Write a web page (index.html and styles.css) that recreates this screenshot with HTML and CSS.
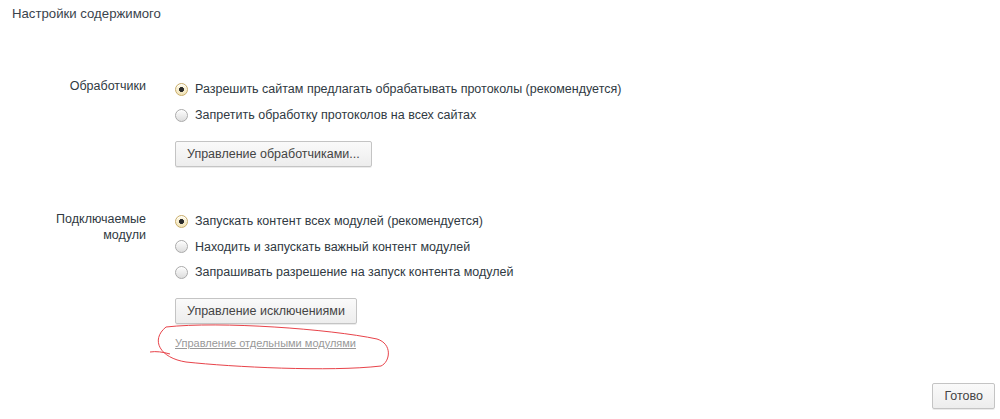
FILE: index.html
```html
<!DOCTYPE html>
<html lang="ru">
<head>
<meta charset="utf-8">
<title>Настройки содержимого</title>
<link rel="stylesheet" href="styles.css">
</head>
<body>
<div class="page">
  <h1 class="title">Настройки содержимого</h1>

  <section class="section first">
    <div class="label">Обработчики</div>
    <div class="content">
      <label class="radio-row"><span class="radio checked"></span>Разрешить сайтам предлагать обрабатывать протоколы (рекомендуется)</label>
      <label class="radio-row"><span class="radio"></span>Запретить обработку протоколов на всех сайтах</label>
      <button class="btn">Управление обработчиками...</button>
    </div>
  </section>

  <section class="section second">
    <div class="label">Подключаемые<br>модули</div>
    <div class="content">
      <label class="radio-row"><span class="radio checked"></span>Запускать контент всех модулей (рекомендуется)</label>
      <label class="radio-row short"><span class="radio"></span>Находить и запускать важный контент модулей</label>
      <label class="radio-row"><span class="radio"></span>Запрашивать разрешение на запуск контента модулей</label>
      <button class="btn">Управление исключениями</button>
      <a class="link" href="#">Управление отдельными модулями</a>
    </div>
  </section>

  <div class="footer">
    <button class="btn done">Готово</button>
  </div>

  <svg class="scribble" width="1000" height="419" viewBox="0 0 1000 419" aria-hidden="true">
    <path d="M 166 327 C 220 321, 330 329, 377 339 C 393 344, 390 362, 381 366 C 330 372, 232 367, 186 362 C 160 358, 150 340, 166 327" fill="none" stroke="#e8434a" stroke-width="1"/>
    <path d="M 150 352 C 156 351, 163 352, 170 354" fill="none" stroke="#e8434a" stroke-width="1"/>
  </svg>
</div>
</body>
</html>
```

FILE: styles.css
```css
html, body {
  margin: 0;
  padding: 0;
  background: #ffffff;
}

body {
  font-family: "Liberation Sans", Arial, sans-serif;
  font-size: 12.5px;
  color: #303942;
}

.page {
  position: relative;
  width: 1000px;
  height: 419px;
  overflow: hidden;
}

.title {
  margin: 0;
  padding: 5px 0 0 12px;
  font-size: 13.2px;
  font-weight: normal;
  line-height: 18px;
  color: #3a434c;
}

.section {
  display: grid;
  grid-template-columns: 146px 1fr;
  column-gap: 29px;
}

.section.first {
  margin-top: 53px;
}

.section.second {
  margin-top: 41px;
}

.label {
  text-align: right;
  line-height: 16px;
  padding-top: 2px;
}

.section.second .label {
  padding-top: 3px;
}

.content {
  display: flex;
  flex-direction: column;
  align-items: flex-start;
}

.radio-row {
  display: flex;
  align-items: center;
  height: 26px;
  line-height: 26px;
  white-space: nowrap;
}

.radio-row.short {
  height: 25px;
}

.radio-text {
  padding-top: 1px;
}

.radio {
  box-sizing: border-box;
  width: 13px;
  height: 13px;
  margin-right: 7px;
  border-radius: 50%;
  border: 1px solid #aaaaaa;
  background: linear-gradient(#fdfdfd, #dddddd);
  box-shadow: inset 0 1px 0 #ffffff;
  flex: none;
}

.radio.checked {
  border-color: #c9ad6a;
  background: radial-gradient(circle, #2c2c2c 0, #2c2c2c 2.2px, transparent 2.8px),
              linear-gradient(#fffbea, #f0e2b6);
}

.btn {
  box-sizing: border-box;
  height: 26px;
  margin-top: 13px;
  padding: 0 11px;
  font-family: "Liberation Sans", Arial, sans-serif;
  font-size: 12.5px;
  color: #444444;
  background: linear-gradient(#fafafa, #ededed);
  border: 1px solid #c4c4c4;
  border-radius: 2px;
  box-shadow: 0 1px 0 rgba(0, 0, 0, 0.08);
}

.link {
  margin-top: 11px;
  line-height: 16px;
  color: #999999;
  font-size: 11px;
  text-decoration: underline;
}

.footer {
  display: flex;
  justify-content: flex-end;
  margin-top: 32px;
  padding-right: 5px;
}

.btn.done {
  margin-top: 0;
  padding: 0 11px;
}

.scribble {
  position: absolute;
  left: 0;
  top: 0;
  pointer-events: none;
}
```
